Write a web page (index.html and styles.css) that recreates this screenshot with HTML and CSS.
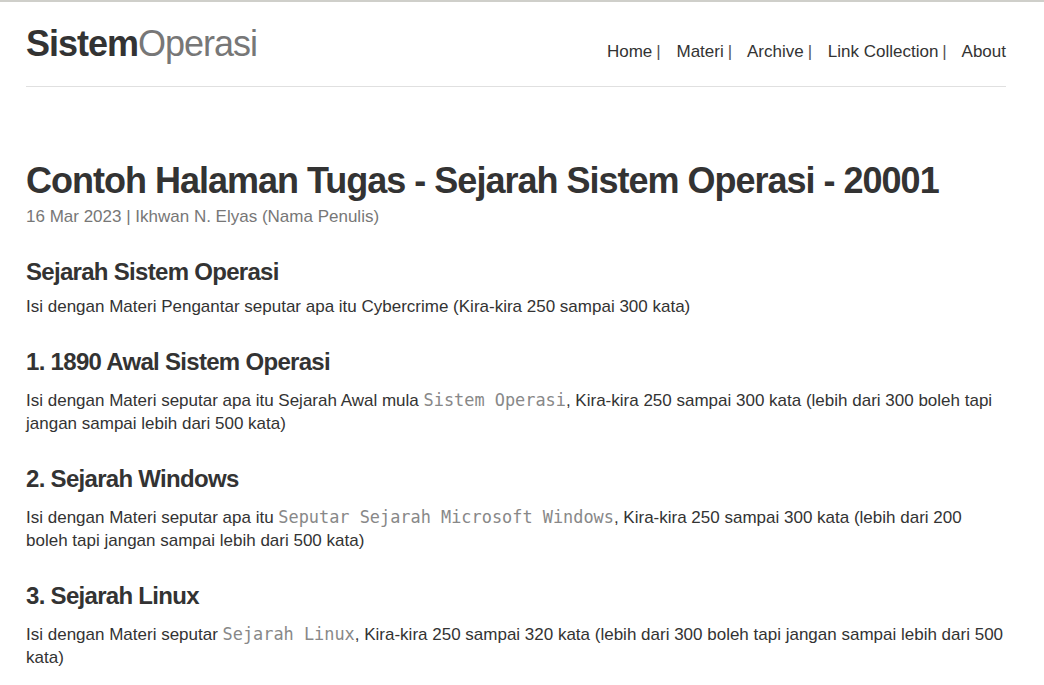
FILE: index.html
```html
<!DOCTYPE html>
<html lang="id">
<head>
<meta charset="utf-8">
<title>Sistem Operasi</title>
<link rel="stylesheet" href="styles.css">
</head>
<body>
<div class="topline"></div>
<div class="wrap">
  <header class="masthead">
    <h3 class="brand"><b>Sistem</b><span class="light">Operasi</span></h3>
    <nav class="nav">
      <a href="#">Home</a><span class="sep">|</span>
      <a href="#">Materi</a><span class="sep">|</span>
      <a href="#">Archive</a><span class="sep">|</span>
      <a href="#">Link Collection</a><span class="sep">|</span>
      <a href="#">About</a>
    </nav>
  </header>
  <main class="post">
    <h1 class="title">Contoh Halaman Tugas - Sejarah Sistem Operasi - 20001</h1>
    <div class="meta">16 Mar 2023 | Ikhwan N. Elyas (Nama Penulis)</div>
    <h2 class="first">Sejarah Sistem Operasi</h2>
    <p>Isi dengan Materi Pengantar seputar apa itu Cybercrime (Kira-kira 250 sampai 300 kata)</p>
    <h2 class="num">1. 1890 Awal Sistem Operasi</h2>
    <p>Isi dengan Materi seputar apa itu Sejarah Awal mula <code>Sistem Operasi</code>, Kira-kira 250 sampai 300 kata (lebih dari 300 boleh tapi jangan sampai lebih dari 500 kata)</p>
    <h2 class="num">2. Sejarah Windows</h2>
    <p>Isi dengan Materi seputar apa itu <code>Seputar Sejarah Microsoft Windows</code>, Kira-kira 250 sampai 300 kata (lebih dari 200 boleh tapi jangan sampai lebih dari 500 kata)</p>
    <h2 class="num">3. Sejarah Linux</h2>
    <p>Isi dengan Materi seputar <code>Sejarah Linux</code>, Kira-kira 250 sampai 320 kata (lebih dari 300 boleh tapi jangan sampai lebih dari 500 kata)</p>
  </main>
</div>
</body>
</html>
```
FILE: styles.css
```css
html, body {
  margin: 0;
  padding: 0;
  background: #fff;
}
body {
  font-family: "Liberation Sans", Arial, sans-serif;
  color: #333;
  font-size: 17px;
  line-height: 23px;
}
.topline {
  height: 2px;
  background: #cfcfca;
}
.wrap {
  width: 980px;
  margin-left: 26px;
}
.masthead {
  display: flex;
  justify-content: space-between;
  align-items: baseline;
  padding-top: 22px;
  padding-bottom: 22px;
  border-bottom: 1px solid #e0e0e0;
}
.brand {
  margin: 0;
  font-size: 36px;
  line-height: 40px;
  font-weight: normal;
  letter-spacing: -1px;
}
.brand b {
  font-weight: bold;
  color: #333;
}
.brand .light {
  color: #777;
}
.nav {
  font-size: 17px;
  line-height: 22px;
  position: relative;
  top: 1px;
}
.nav a {
  color: #333;
  text-decoration: none;
}
.nav .sep {
  color: #555;
  margin-left: 4px;
  margin-right: 11px;
}
.post {
  padding-top: 74px;
}
.title {
  margin: 0;
  font-size: 36px;
  line-height: 40px;
  font-weight: bold;
  letter-spacing: -1px;
  color: #333;
}
.meta {
  color: #777;
  font-size: 17px;
  margin-top: 4px;
}
h2 {
  font-size: 24px;
  line-height: 30px;
  font-weight: bold;
  letter-spacing: -0.7px;
  color: #333;
}
h2.first {
  margin: 29px 0 8px;
}
h2.num {
  margin: 29px 0 12px;
}
p {
  margin: 0;
}
code {
  font-family: "DejaVu Sans Mono", monospace;
  font-size: 16.9px;
  line-height: 1;
  color: #888;
}
```
